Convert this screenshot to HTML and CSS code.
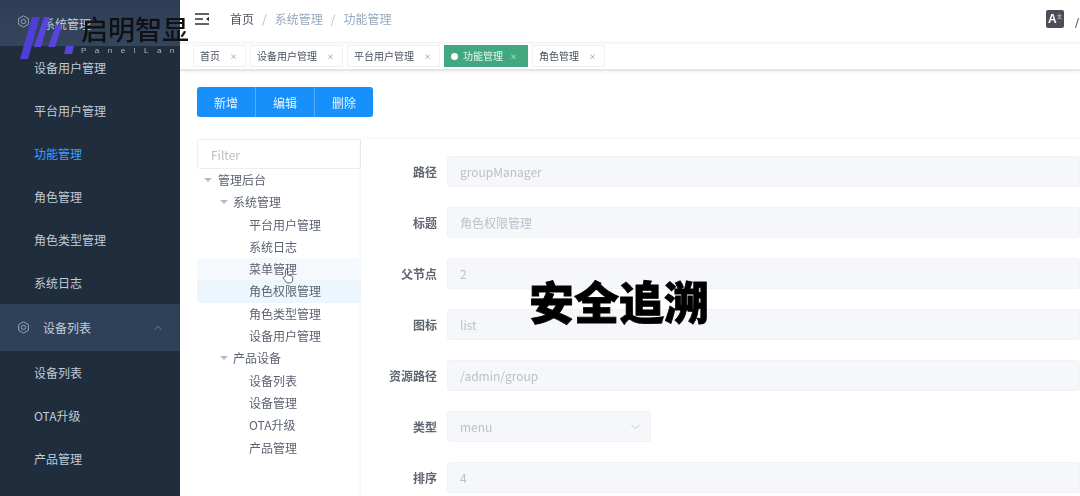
FILE: index.html
```html
<!DOCTYPE html>
<html lang="zh-CN">
<head>
<meta charset="utf-8">
<title>功能管理</title>
<link rel="stylesheet" href="styles.css">
</head>
<body>
<div class="app">
  <aside class="sidebar">
    <div class="group-head first">
      <svg class="gear" viewBox="0 0 24 24"><path d="M12 1.500l9 5.200v10.600l-9 5.200-9-5.200V6.700z"/><circle cx="12" cy="12" r="4"/></svg>
      <span>系统管理</span>
    </div>
    <a class="item">设备用户管理</a>
    <a class="item">平台用户管理</a>
    <a class="item active">功能管理</a>
    <a class="item">角色管理</a>
    <a class="item">角色类型管理</a>
    <a class="item">系统日志</a>
    <div class="group-head second">
      <svg class="gear" viewBox="0 0 24 24"><path d="M12 1.500l9 5.200v10.600l-9 5.200-9-5.200V6.700z"/><circle cx="12" cy="12" r="4"/></svg>
      <span>设备列表</span>
      <svg class="caret" viewBox="0 0 12 12"><path d="M2 8l4-4 4 4"/></svg>
    </div>
    <a class="item">设备列表</a>
    <a class="item">OTA升级</a>
    <a class="item">产品管理</a>
    <a class="item">设备管理</a>
  </aside>

  <main class="main">
    <header class="navbar">
      <svg class="hamburger" viewBox="0 0 14 12"><path d="M0 1h14M0 6h8M0 11h14"/><path class="tri" d="M14 3.800v4.400l-3-2.200z"/></svg>
      <nav class="crumbs">
        <span class="crumb-home">首页</span><i>/</i><span>系统管理</span><i>/</i><span>功能管理</span>
      </nav>
      <div class="lang">A<sup>文</sup></div>
      <svg class="avatar-edge" viewBox="0 0 5 10"><path d="M.5 10L3.500 0"/></svg>
    </header>

    <div class="tags">
      <span class="tag">首页<b>×</b></span>
      <span class="tag">设备用户管理<b>×</b></span>
      <span class="tag">平台用户管理<b>×</b></span>
      <span class="tag on"><em></em>功能管理<b>×</b></span>
      <span class="tag">角色管理<b>×</b></span>
    </div>

    <section class="content">
      <div class="btns">
        <button>新增</button><button>编辑</button><button>删除</button>
      </div>
      <div class="split">
        <div class="tree-col">
          <div class="filter">Filter</div>
          <ul class="tree">
            <li class="l1"><s></s>管理后台</li>
            <li class="l2"><s></s>系统管理</li>
            <li class="l3">平台用户管理</li>
            <li class="l3">系统日志</li>
            <li class="l3 hover">菜单管理</li>
            <li class="l3 current">角色权限管理</li>
            <li class="l3">角色类型管理</li>
            <li class="l3">设备用户管理</li>
            <li class="l2"><s></s>产品设备</li>
            <li class="l3">设备列表</li>
            <li class="l3">设备管理</li>
            <li class="l3">OTA升级</li>
            <li class="l3">产品管理</li>
          </ul>
        </div>
        <form class="form">
          <div class="row"><label>路径</label><div class="field">groupManager</div></div>
          <div class="row"><label>标题</label><div class="field">角色权限管理</div></div>
          <div class="row"><label>父节点</label><div class="field">2</div></div>
          <div class="row"><label>图标</label><div class="field">list</div></div>
          <div class="row"><label>资源路径</label><div class="field">/admin/group</div></div>
          <div class="row"><label>类型</label><div class="field select">menu<svg viewBox="0 0 12 12"><path d="M1.500 4l4.500 4.500L10.500 4"/></svg></div></div>
          <div class="row"><label>排序</label><div class="field">4</div></div>
        </form>
      </div>
    </section>
  </main>
</div>

<div class="brand">
  <svg class="brand-mark" viewBox="20 14 58 46">
    <path d="M32 17h8l-12 42h-8z" fill="#4f3fd6"/>
    <path d="M44 17h6l-9 30h-7z" fill="#5a44de"/>
    <path d="M56 25h6l-7 22h-7z" fill="#5a44de"/>
    <path d="M66 46h8l-2 8h-8z" fill="#5a44de"/>
  </svg>
  <div class="brand-text">
    <div class="brand-cn">启明智显</div>
    <div class="brand-en">PanelLan</div>
  </div>
</div>
<svg class="cursor" viewBox="0 0 14 18"><path d="M4 8V2.200a1.200 1.200 0 0 1 2.400 0V7l5 1.500c1 .4 1.300 1 1.200 2l-.6 4c-.2 1.200-1 2-2.200 2H7c-1 0-1.600-.4-2.200-1.200L1.500 11c-.7-1 .6-2.300 1.600-1.400z"/></svg>
<div class="stamp">安全追溯</div>
</body>
</html>
```
FILE: styles.css
```css
* { box-sizing: border-box; }
html, body { margin: 0; height: 496px; overflow: hidden; background: #fff; }
body { font-family: "Noto Sans CJK SC", "Noto Sans", sans-serif; font-size: 12px; position: relative; }
.app { display: flex; width: 1080px; height: 496px; overflow: hidden; filter: blur(.45px); }

.sidebar { width: 180px; flex: none; background: #1f2d3d; color: #bfcbd9; display: flex; flex-direction: column; overflow: hidden; }
.group-head { display: flex; align-items: center; background: #2f4059; padding-left: 17px; flex: none; }
.group-head.first { height: 46px; background: linear-gradient(#2d3e55, #34455e); }
.group-head.second { height: 47px; padding-right: 17px; }
.group-head span { margin-left: 13px; color: #c3cedb; }
.group-head.first .gear { margin-top: -4px; }
.gear { width: 13px; height: 13px; fill: none; stroke: #9aa8b8; stroke-width: 1.800; }
.caret { width: 10px; height: 10px; margin-left: auto; fill: none; stroke: #6f8098; stroke-width: 1.200; }
.item { display: block; height: 43px; line-height: 43px; padding-left: 34px; flex: none; color: #c0cbd8; }
.item.active { color: #409eff; }

.main { flex: 1; min-width: 0; display: flex; flex-direction: column; }
.navbar { height: 42px; flex: none; display: flex; align-items: center; padding-left: 15px; padding-bottom: 5px; }
.hamburger { width: 14px; height: 12px; fill: none; stroke: #2b323d; stroke-width: 1.600; margin-right: 21px; }
.hamburger .tri { fill: #2b323d; stroke: none; }
.crumbs { color: #97a8be; display: flex; align-items: center; }
.crumbs i { font-style: normal; margin: 0 8px; color: #b5bdc8; }
.crumb-home { color: #4f5560; }
.lang { margin-left: auto; margin-right: 11px; width: 18px; height: 18px; background: #4b4e57; border-radius: 2px; color: #fff; font: bold 12px/18px "Liberation Sans", sans-serif; padding-left: 2px; overflow: hidden; white-space: nowrap; }
.lang sup { font-size: 5px; line-height: 0; vertical-align: 5px; color: #b9bcc2; }
.avatar-edge { width: 5px; height: 10px; align-self: flex-end; margin: 0 0 9px 0; fill: none; stroke: #50545c; stroke-width: 1; }

.tags { height: 29px; flex: none; display: flex; align-items: center; gap: 4px; padding: 0 0 1px 13px; border-top: 2px solid #f6f6f6; border-bottom: 2px solid #e6e6e6; box-shadow: 0 1px 3px rgba(0,0,0,.06); }
.tag { height: 22px; line-height: 20px; border: 1px solid #eef0f3; padding: 0 8px 0 6px; font-size: 10px; color: #495060; display: flex; align-items: center; background: #fff; white-space: nowrap; }
.tag b { font-weight: 400; font-size: 7px; margin-left: 10px; color: #777f8c; }
.tag.on { background: #42a87f; border-color: #42a87f; color: #eaf6f1; padding-left: 6px; padding-right: 10px; }
.tag.on b { color: #dff2ea; margin-left: 7px; }
.tag em { width: 7px; height: 7px; border-radius: 50%; background: #fff; margin-right: 5px; }

.content { flex: 1; min-height: 0; padding: 16px 0 0 17px; }
.btns { display: flex; width: 176px; height: 30px; }
.btns button { flex: 1; border: 0; border-right: 1px solid #56aaff; background: #1790fb; color: #e8f4ff; font: inherit; padding: 0; }
.btns button:first-child { border-radius: 3px 0 0 3px; }
.btns button:last-child { border-radius: 0 3px 3px 0; border-right: 0; }

.split { display: flex; margin-top: 22px; }
.tree-col { width: 164px; flex: none; }
.filter { height: 30px; border: 1px solid #eceef2; border-radius: 3px 0 0 3px; color: #b9bec7; line-height: 29px; padding-left: 13px; }
.tree { list-style: none; margin: 0; padding: 0; color: #5b6270; }
.tree li { height: 22.300px; line-height: 22.300px; position: relative; white-space: nowrap; }
.tree .l1 { padding-left: 21px; }
.tree .l2 { padding-left: 36px; }
.tree .l3 { padding-left: 52px; }
.tree .hover { background: #f5f8fc; }
.tree .current { background: #edf5fd; }
.tree s { position: absolute; top: 9px; width: 0; height: 0; border: 4px solid transparent; border-top: 4px solid #b4b9c2; border-bottom: 0; }
.tree .l1 s { left: 7px; }
.tree .l2 s { left: 23px; }

.form { flex: 1; min-width: 0; padding: 17px 0 0 0; background: #fff; box-shadow: 0 0 5px rgba(0,0,0,.07); border-radius: 3px 0 0 0; height: 400px; }
.row { display: flex; align-items: center; height: 31px; margin-bottom: 20px; }
.row label { width: 76px; flex: none; text-align: right; color: #5f6672; font-weight: 700; }
.field { flex: 1; margin-left: 10px; height: 31px; line-height: 30px; background: #f5f7fa; border: 1px solid #f0f2f5; border-radius: 3px; color: #bcc1c9; padding-left: 12px; }
.select { flex: none; width: 204px; display: flex; align-items: center; justify-content: space-between; padding-right: 9px; }
.select svg { width: 11px; height: 11px; fill: none; stroke: #c0c4cc; stroke-width: 1; }

.brand { position: absolute; left: 20px; top: 14px; display: flex; }
.brand-mark { width: 58px; height: 46px; }
.brand-text { margin-left: 3px; }
.brand-cn { font-size: 27px; line-height: 30px; font-weight: 500; color: #111; width: 108px; white-space: nowrap; }
.brand-en { font-size: 8px; line-height: 10px; margin-top: 2px; color: #b3b7bf; letter-spacing: 8.500px; width: 110px; white-space: nowrap; font-family: "Liberation Sans", sans-serif; }
.cursor { position: absolute; left: 282px; top: 268px; width: 12px; height: 17px; fill: #fff; stroke: #444a55; stroke-width: 1; }
.stamp { position: absolute; left: 529px; top: 271px; font-size: 45px; line-height: 60px; font-weight: 900; color: #000; white-space: nowrap; -webkit-text-stroke: .8px #000; }
```
